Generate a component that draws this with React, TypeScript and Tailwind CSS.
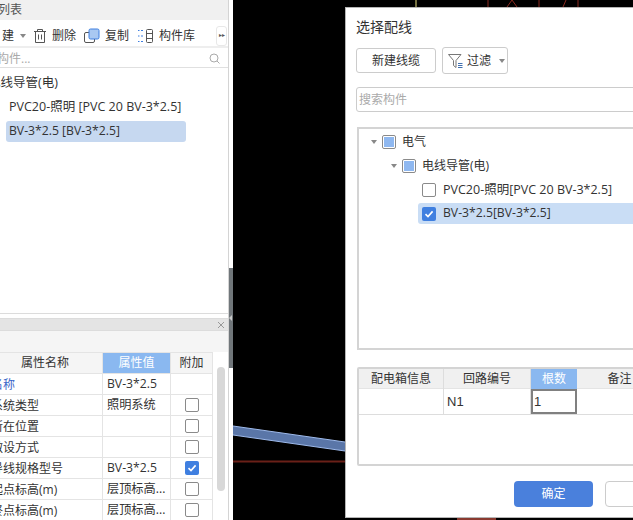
const font = { fontFamily: '"Open Sans", "Noto Sans CJK SC", sans-serif' };

const Check = ({ checked }: { checked?: boolean }) =>
  checked ? (
    <span className="flex h-[14px] w-[14px] items-center justify-center rounded-[2px] bg-[#3f7fe0]">
      <svg width="10" height="10" viewBox="0 0 10 10" fill="none">
        <path d="M1.5 5.2 L4 7.6 L8.6 2.4" stroke="white" strokeWidth="1.6" />
      </svg>
    </span>
  ) : (
    <span className="h-[14px] w-[14px] rounded-[2px] border border-[#8a8a8a] bg-white" />
  );

const Partial = () => (
  <span className="flex h-[14px] w-[14px] items-center justify-center rounded-[2px] border border-[#8a8a8a] bg-white">
    <span className="h-[10px] w-[10px] bg-[#8fb8f0]" />
  </span>
);

const Arrow = () => <span className="block h-0 w-0 border-x-[3px] border-t-[4px] border-x-transparent border-t-[#888]" />;

const rows = [
  { name: "名称", value: "BV-3*2.5", blue: true },
  { name: "系统类型", value: "照明系统", check: false },
  { name: "所在位置", value: "", check: false },
  { name: "敷设方式", value: "", check: false },
  { name: "导线规格型号", value: "BV-3*2.5", check: true },
  { name: "起点标高(m)", value: "层顶标高...", check: false },
  { name: "终点标高(m)", value: "层顶标高...", check: false },
];

const LeftPanel = () => (
  <div className="flex h-[520px] w-[229px] shrink-0 flex-col overflow-hidden border-r border-[#d4d4d4] bg-white text-[12.5px] text-[#333]">
    <div className="flex h-[20px] shrink-0 items-center bg-[#f0f0f0] text-[12px]">
      <span className="-ml-[2px] text-[#555]">列表</span>
    </div>
    <div className="flex h-[28px] shrink-0 items-center border-b-2 border-[#eeeeee] pt-[5px] text-[12px]">
      <span className="ml-[2px]">建</span>
      <span className="ml-[6px]"><Arrow /></span>
      <svg className="ml-[7px]" width="14" height="16" viewBox="0 0 14 16" fill="none" stroke="#555">
        <path d="M1 3.500H13M4.500 3V1.500H9.500V3M2.500 3.500V14.500H11.500V3.500M5.500 6.500V11.500M8.500 6.500V11.500" />
      </svg>
      <span className="ml-[5px]">删除</span>
      <svg className="ml-[8px]" width="16" height="16" viewBox="0 0 16 16" fill="none">
        <rect x="0.500" y="4.500" width="10" height="10" rx="1.500" stroke="#555" fill="white" />
        <rect x="5" y="1" width="10" height="10" rx="1.500" fill="#a9c8f2" stroke="#3f7fe0" />
      </svg>
      <span className="ml-[5px]">复制</span>
      <svg className="ml-[9px]" width="15" height="16" viewBox="0 0 15 16" fill="none">
        <path d="M0 2.500H1.500M3 2.500H5M0 8H1.500M3 8H5M0 13.500H1.500M3 13.500H5" stroke="#3f7fe0" />
        <rect x="8.500" y="1.500" width="6" height="13" rx="1" stroke="#555" />
        <path d="M8.500 5.500H14.500M8.500 10.500H14.500" stroke="#555" />
      </svg>
      <span className="ml-[6px]">构件库</span>
      <span className="ml-auto mr-[1px] flex h-[20px] w-[11px] items-center justify-center rounded-[3px] border border-[#e8e8e8] text-[6px] text-[#555]">▸▸</span>
    </div>
    <div className="flex h-[20px] shrink-0 items-center border-b border-[#e0e0e0] pt-[2px] text-[12px] text-[#aaa]">
      <span className="-ml-[3px]">构件...</span>
      <svg className="ml-auto mr-[8px]" width="11" height="11" viewBox="0 0 11 11" fill="none" stroke="#aaa">
        <circle cx="5" cy="5" r="4" />
        <path d="M8 8L10.500 10.500" />
      </svg>
    </div>
    <div className="flex h-[246px] shrink-0 flex-col border-b border-[#dcdcdc] pt-[4px]">
      <div className="flex h-[23px] items-center"><span className="-ml-[12px]">电线导管(电)</span></div>
      <div className="flex h-[25px] items-center pl-[9px]">PVC20-照明 [PVC 20 BV-3*2.5]</div>
      <div className="ml-[6px] mt-[1px] flex h-[21px] w-[180px] items-center rounded-[3px] bg-[#c6d8f0] pl-[3px] text-[12.2px]">BV-3*2.5 [BV-3*2.5]</div>
    </div>
    <div className="mt-[4px] flex h-[13px] shrink-0 items-center justify-end border-y border-[#dcdcdc] bg-[#e4e4e4] pr-[3px]">
      <svg width="8" height="8" viewBox="0 0 8 8" stroke="#999"><path d="M1 1L7 7M7 1L1 7" /></svg>
    </div>
    <div className="h-[21px] shrink-0 bg-[#f5f5f5]" />
    <div className="flex min-h-0 flex-1">
      <div className="w-[213px] shrink-0 overflow-hidden border-r border-[#e4e4e4]">
        <div className="grid h-[22px] grid-cols-[102px_69px_41px] items-stretch border-y border-[#e4e4e4] bg-[#f5f5f5] text-center text-[12px] leading-[20px]">
          <span className="pr-[12px]">属性名称</span>
          <span className="border-x border-[#e4e4e4] bg-[#8ab8f0] text-white">属性值</span>
          <span>附加</span>
        </div>
        {rows.map((row) => (
          <div key={row.name} className="grid h-[21px] grid-cols-[102px_69px_41px] items-center border-b border-[#e4e4e4]">
            <span className={`-ml-[9px] whitespace-nowrap pt-[1px] text-[12px] ${row.blue ? "text-[#3a66c8]" : ""}`}>{row.name}</span>
            <span className="flex h-full items-center whitespace-nowrap border-x border-[#e4e4e4] pl-[4px] pt-[1px] text-[12.2px]">{row.value}</span>
            <span className="flex justify-center">{row.check !== undefined && <Check checked={row.check} />}</span>
          </div>
        ))}
      </div>
      <div className="ml-[4px] mt-[15px] h-[124px] w-[8px] rounded-[4px] bg-[#d8d8d8]" />
    </div>
  </div>
);

const Dialog = () => (
  <div className="absolute left-[116px] top-[7px] flex h-[511px] w-[340px] flex-col border border-[#b5b5b5] bg-white pl-[10px] text-[12.5px] text-[#333]">
    <div className="mt-[9px] text-[14px] leading-[20px]">选择配线</div>
    <div className="mt-[10px] flex items-start gap-[6px]">
      <button className="mt-[1px] h-[25px] w-[80px] rounded-[3px] border border-[#ccc] text-[12px]">新建线缆</button>
      <button className="flex h-[27px] w-[66px] items-center rounded-[3px] border border-[#ccc] pl-[5px] text-[12px]">
        <svg width="15" height="16" viewBox="0 0 15 16" fill="none">
          <path d="M0.500 1.500H13L8 7.500V14.500L5.500 12.500V7.500Z" stroke="#777" />
          <path d="M10 10.500H14.500M10 12.500H14.500M10 14.500H14.500" stroke="#3f6fb0" />
        </svg>
        <span className="ml-[4px]">过滤</span>
        <span className="ml-[8px]"><Arrow /></span>
      </button>
    </div>
    <div className="mt-[13px] flex h-[25px] w-[300px] items-center rounded-[3px] border border-[#ccc] pl-[2px] text-[12px] text-[#aaa]">搜索构件</div>
    <div className="ml-[1px] mt-[15px] h-[223px] w-[300px] border-2 border-[#d4d4d4] pl-[12px] pt-[1px]">
      <div className="flex h-[23px] items-center">
        <Arrow />
        <span className="ml-[5px]"><Partial /></span>
        <span className="ml-[6px] text-[12px]">电气</span>
      </div>
      <div className="ml-[20px] flex h-[25px] items-center">
        <Arrow />
        <span className="ml-[5px]"><Partial /></span>
        <span className="ml-[6px] text-[12px]">电线导管(电)</span>
      </div>
      <div className="ml-[51px] flex h-[24px] items-center">
        <Check />
        <span className="ml-[7px]">PVC20-照明[PVC 20 BV-3*2.5]</span>
      </div>
      <div className="ml-[47px] mt-[1px] flex h-[21px] items-center rounded-l-[3px] bg-[#c9ddf5] pl-[4px]">
        <Check checked />
        <span className="ml-[7px] text-[12.2px]">BV-3*2.5[BV-3*2.5]</span>
      </div>
    </div>
    <div className="ml-[1px] mt-[17px] h-[99px] w-[300px] rounded-[2px] border-2 border-[#d4d4d4]">
      <div className="grid h-[20px] grid-cols-[85px_87px_46px_85px] border-b border-[#e4e4e4] bg-[#f0f0f0] text-center text-[12px] leading-[20px]">
        <span className="border-r border-[#ddd]">配电箱信息</span>
        <span className="border-r border-[#ddd]">回路编号</span>
        <span className="bg-[#8ab8f0] text-white">根数</span>
        <span>备注</span>
      </div>
      <div className="grid h-[26px] grid-cols-[85px_87px_46px_85px] border-b border-[#ddd] text-[13px]" style={{ fontFamily: '"Liberation Sans", sans-serif' }}>
        <span className="border-r border-[#ddd]" />
        <span className="flex items-center border-r border-[#ddd] pl-[3px]">N1</span>
        <span className="flex items-center border-2 border-[#808080] pl-[1px]">1</span>
        <span />
      </div>
    </div>
    <div className="ml-[158px] mt-[15px] flex gap-[12px] text-[12px]">
      <button className="h-[26px] w-[80px] rounded-[4px] bg-[#4a80dc] text-white">确定</button>
      <button className="h-[26px] w-[80px] rounded-[4px] border border-[#ccc]" />
    </div>
  </div>
);

export default function App() {
  return (
    <div className="flex h-[520px] w-[633px] overflow-hidden bg-white" style={font}>
      <LeftPanel />
      <div className="relative flex-1">
        <div className="absolute inset-y-0 left-[4px] right-0 bg-black">
          <svg className="h-full w-full" viewBox="0 0 400 520" fill="none">
            <polygon points="0,426 112,442 112,451 0,435" fill="#5a76a8" />
            <path d="M0 426L112 442M0 435L112 451" stroke="#9db9ea" />
            <path d="M0 461.500H112" stroke="#6a2018" strokeWidth="2" />
            <path d="M183 0V7" stroke="#e8e080" />
            <path d="M255 0V7M274 7L279 0L284 7M306 0V7M330 7L333 0M345 0V7" stroke="#8a2a20" />
            <path d="M224 519H263" stroke="#8a3a30" strokeWidth="2" />
          </svg>
        </div>
        <div className="absolute left-0 top-[268px] flex h-[100px] w-[4px] items-center bg-[#70767a]">
          <span className="h-0 w-0 border-y-[3px] border-r-[3px] border-y-transparent border-r-[#c8c8c8]" />
        </div>
        <Dialog />
      </div>
    </div>
  );
}
